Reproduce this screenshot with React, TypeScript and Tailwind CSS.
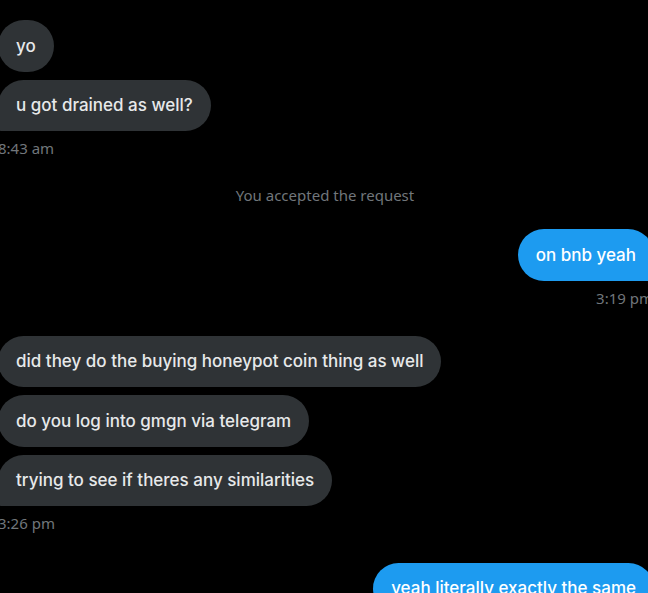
import React from "react";

type Msg = { text: string; last?: boolean };

const font = { fontFamily: '"Noto Sans", "Open Sans", Arial, sans-serif' };
const bubbleFont = { fontFamily: 'Inter, "Noto Sans", Arial, sans-serif' };

function Received({ text, last }: Msg) {
  return (
    <div className="flex">
      <div
        style={bubbleFont}
        className={`bg-[#2f3336] text-[#e7e9ea] text-[17px] font-medium leading-[20px] py-[15.75px] px-[18px] rounded-[26px] whitespace-nowrap ${
          last ? "rounded-bl-[4px]" : ""
        }`}
      >
        {text}
      </div>
    </div>
  );
}

function Sent({ text, last }: Msg) {
  return (
    <div className="flex justify-end">
      <div
        style={bubbleFont}
        className={`bg-[#1d9bf0] text-white text-[17px] font-medium leading-[20px] py-[15.75px] px-[18px] rounded-[26px] whitespace-nowrap ${
          last ? "rounded-br-[4px]" : ""
        }`}
      >
        {text}
      </div>
    </div>
  );
}

function Time({ children, right }: { children: React.ReactNode; right?: boolean }) {
  return (
    <div className={`text-[15px] leading-[20px] text-[#71767b] mt-[7px] ${right ? "text-right" : ""}`}>
      {children}
    </div>
  );
}

export default function App() {
  return (
    <div className="bg-black h-[593px] w-[648px] overflow-hidden" style={font}>
      <div className="w-[656px] -ml-[2px] pt-[20px] flex flex-col">
        <div className="flex flex-col gap-2">
          <Received text="yo" />
          <Received text="u got drained as well?" last />
        </div>
        <Time>8:43 am</Time>

        <div className="mt-[27px] text-center text-[15px] leading-[20px] text-[#71767b] pr-[2px]">
          You accepted the request
        </div>

        <div className="mt-[24px]">
          <Sent text="on bnb yeah" last />
        </div>
        <div className="pr-[1px]">
          <Time right>3:19 pm</Time>
        </div>

        <div className="mt-[28px] flex flex-col gap-2">
          <Received text="did they do the buying honeypot coin thing as well" />
          <Received text="do you log into gmgn via telegram" />
          <Received text="trying to see if theres any similarities" last />
        </div>
        <Time>3:26 pm</Time>

        <div className="mt-[29.5px]">
          <Sent text="yeah literally exactly the same" />
        </div>
      </div>
    </div>
  );
}
